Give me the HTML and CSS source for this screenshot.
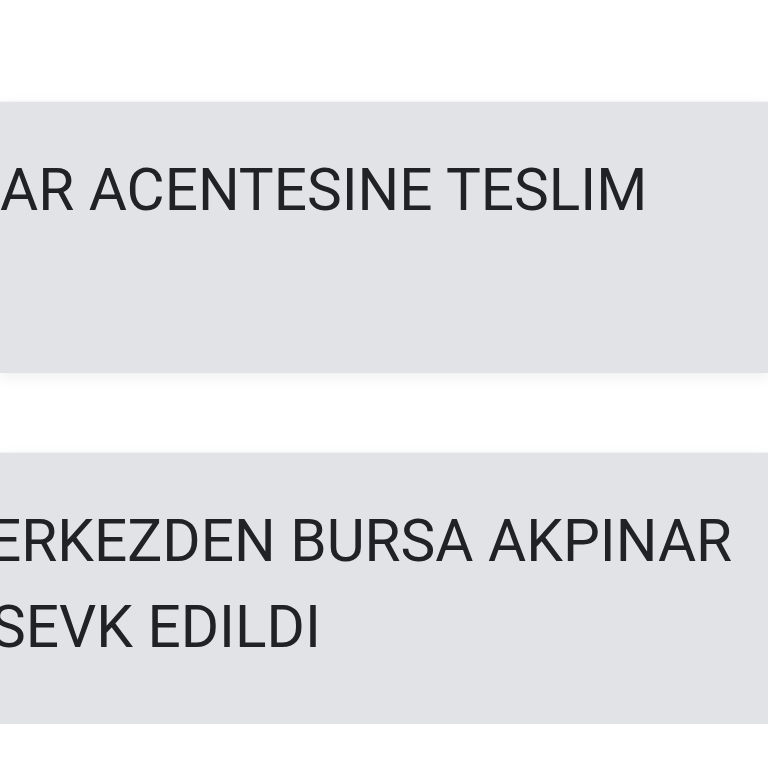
FILE: index.html
```html
<!DOCTYPE html>
<html lang="tr">
<head>
<meta charset="utf-8">
<title>Kargo Takip</title>
<link rel="stylesheet" href="styles.css">
</head>
<body>
<div class="list">
  <div class="card">
    <div class="line line-a">AR ACENTESINE TESLIM</div>
  </div>
  <div class="card">
    <div class="line line-b">ERKEZDEN BURSA AKPINAR</div>
    <div class="line line-c">SEVK EDILDI</div>
  </div>
</div>
</body>
</html>
```

FILE: styles.css
```css
html, body {
  margin: 0;
  padding: 0;
  background: #ffffff;
}
body {
  font-family: Roboto, "Noto Sans", sans-serif;
  overflow: hidden;
}
.list {
  display: flex;
  flex-direction: column;
  gap: 80px;
  padding-top: 102px;
}
.card {
  box-sizing: border-box;
  height: 271px;
  background: #e2e3e6;
  padding: 45px 0 0 0;
  overflow: hidden;
  box-shadow: 0 -1px 1px rgba(0,0,0,0.03), 0 4px 14px rgba(0,0,0,0.07);
}
.line {
  font-size: 58.5px;
  line-height: 86px;
  color: #212226;
  white-space: nowrap;
}
.line-a { margin-left: 0; }
.line-b { margin-left: -12px; }
.line-c { margin-left: -9px; }
```
